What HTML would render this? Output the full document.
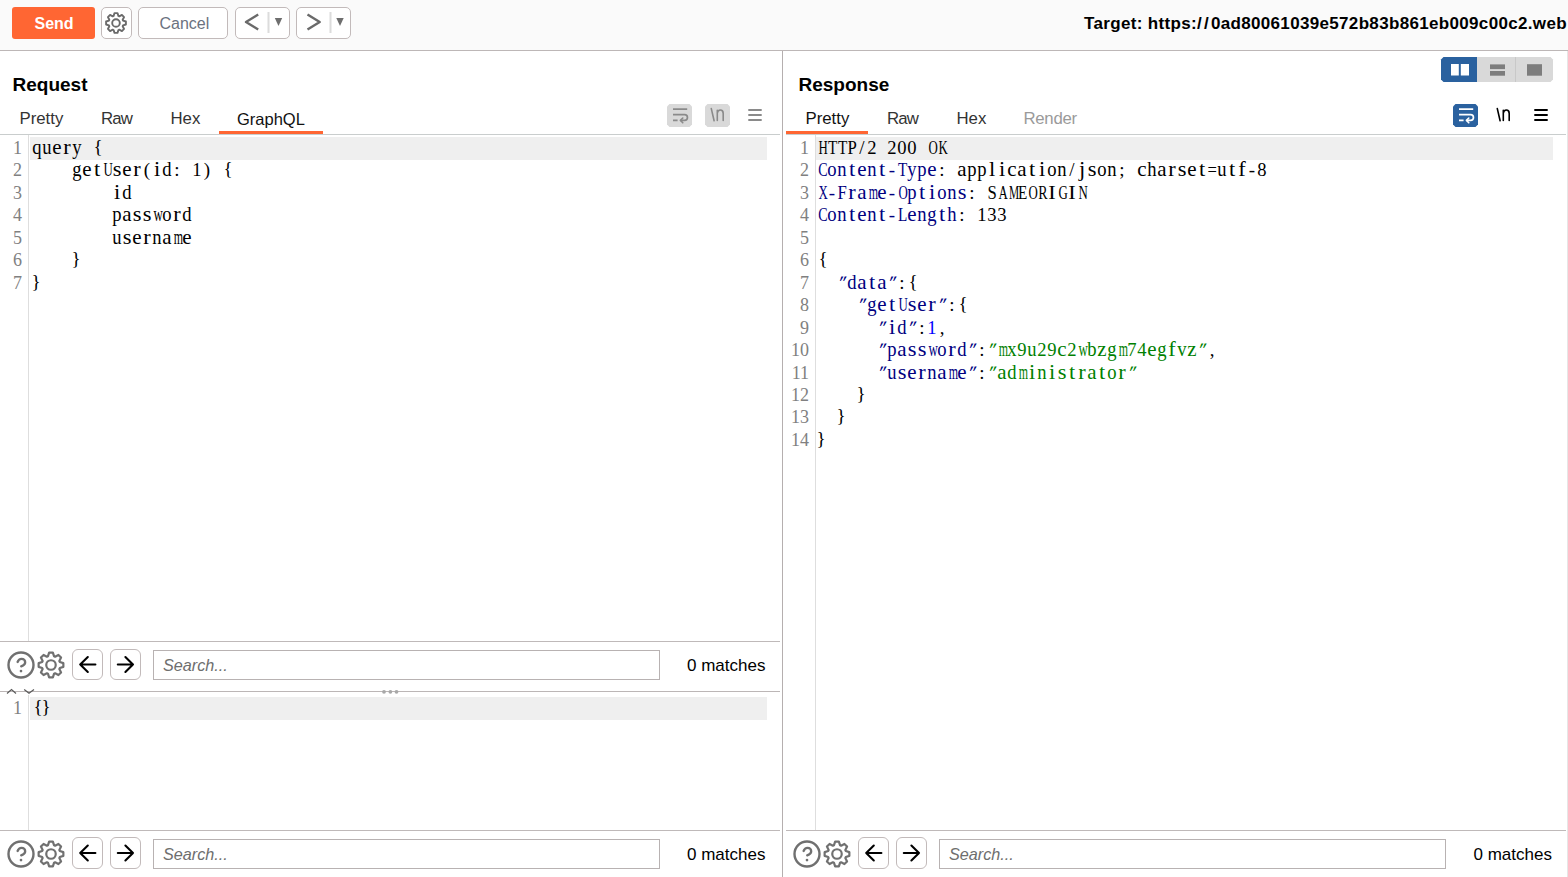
<!DOCTYPE html>
<html><head><meta charset="utf-8"><style>*{margin:0;padding:0;box-sizing:border-box}
html,body{width:1568px;height:877px;overflow:hidden;background:#fff;position:relative;font-family:"Liberation Sans",sans-serif}
.a{position:absolute}
svg.a{overflow:visible}
.t{position:absolute;line-height:1;white-space:pre}
.code{position:absolute;font-family:"Liberation Serif",serif;font-size:19px;white-space:pre;line-height:22.45px}
.code i{font-style:normal;display:inline-block;width:10px;text-align:center;transform-origin:50% 17.6px}
.ln{position:absolute;font-family:"Liberation Serif",serif;font-size:18px;color:#808080;text-align:right;white-space:pre;line-height:22.45px}
</style></head><body>
<div class="a" style="left:0px;top:0px;width:1568px;height:50px;background:#fafafa;"></div>
<div class="a" style="left:0px;top:50px;width:1568px;height:1px;background:#bdb7b7;"></div>
<div class="a" style="left:12px;top:7px;width:83px;height:32px;background:#ff6633;border-radius:3px"></div>
<div class="t" style="left:34.5px;top:16.46px;font-size:16px;font-weight:bold;color:#fff;font-style:normal;">Send</div>
<div class="a" style="left:101px;top:7px;width:31px;height:32px;border:1px solid #c2baba;border-radius:5px;background:#fff"></div>
<svg class="a" style="left:100.0px;top:7.0px" width="32" height="32" viewBox="0 0 32 32"><path d="M13.59,8.96 L14.51,6.11 L17.49,6.11 L18.41,8.96 A7.44,7.44 0 0 1 19.27,9.32 L21.93,7.95 L24.05,10.07 L22.68,12.73 A7.44,7.44 0 0 1 23.04,13.59 L25.89,14.51 L25.89,17.49 L23.04,18.41 A7.44,7.44 0 0 1 22.68,19.27 L24.05,21.93 L21.93,24.05 L19.27,22.68 A7.44,7.44 0 0 1 18.41,23.04 L17.49,25.89 L14.51,25.89 L13.59,23.04 A7.44,7.44 0 0 1 12.73,22.68 L10.07,24.05 L7.95,21.93 L9.32,19.27 A7.44,7.44 0 0 1 8.96,18.41 L6.11,17.49 L6.11,14.51 L8.96,13.59 A7.44,7.44 0 0 1 9.32,12.73 L7.95,10.07 L10.07,7.95 L12.73,9.32 A7.44,7.44 0 0 1 13.59,8.96Z" fill="none" stroke="#6a6a6a" stroke-width="1.9" stroke-linejoin="round"/><circle cx="16.0" cy="16.0" r="3.8000000000000003" fill="none" stroke="#6a6a6a" stroke-width="1.9"/></svg>
<div class="a" style="left:138px;top:7px;width:90px;height:32px;border:1px solid #c2baba;border-radius:5px;background:#fff"></div>
<div class="t" style="left:159.5px;top:16.46px;font-size:16px;font-weight:normal;color:#6b7280;font-style:normal;">Cancel</div>
<div class="a" style="left:235px;top:7px;width:55px;height:32px;border:1px solid #c2baba;border-radius:5px;background:#fff"></div>
<div class="a" style="left:296px;top:7px;width:55px;height:32px;border:1px solid #c2baba;border-radius:5px;background:#fff"></div>
<svg class="a" style="left:235px;top:7px" width="55" height="32" viewBox="0 0 55 32"><path d="M23.2,7.5 L11,15 L23.2,22.5" fill="none" stroke="#6a6a6a" stroke-width="2.4" stroke-linejoin="round"/><rect x="32.5" y="5" width="2" height="21" fill="#dcdcdc"/><path d="M39.8,11 H47.2 L43.5,19 Z" fill="#6e6e6e"/></svg>
<svg class="a" style="left:296px;top:7px" width="55" height="32" viewBox="0 0 55 32"><path d="M11.5,7.5 L23.7,15 L11.5,22.5" fill="none" stroke="#6a6a6a" stroke-width="2.4" stroke-linejoin="round"/><rect x="33.5" y="5" width="2" height="21" fill="#dcdcdc"/><path d="M40.3,11 H47.7 L44,19 Z" fill="#6e6e6e"/></svg>
<div class="t" style="left:1084px;top:14.6px;font-size:17px;font-weight:bold;color:#000;letter-spacing:0.33px">Target: https:<span style="letter-spacing:2.3px">//</span>0ad80061039e572b83b861eb009c00c2.web</div>
<div class="a" style="left:782px;top:51px;width:1px;height:826px;background:#b5afaf;"></div>
<div class="t" style="left:12.5px;top:74.92px;font-size:19px;font-weight:bold;color:#000;font-style:normal;">Request</div>
<div class="t" style="left:19.5px;top:110.78px;font-size:16.8px;font-weight:normal;color:#333;font-style:normal;">Pretty</div>
<div class="t" style="left:101px;top:110.78px;font-size:16.8px;font-weight:normal;color:#333;font-style:normal;letter-spacing:-0.8px">Raw</div>
<div class="t" style="left:170.5px;top:110.78px;font-size:16.8px;font-weight:normal;color:#333;font-style:normal;">Hex</div>
<div class="t" style="left:237px;top:111.03px;font-size:16.5px;font-weight:normal;color:#111;font-style:normal;">GraphQL</div>
<div class="a" style="left:219px;top:131px;width:104px;height:3px;background:#ff6633;"></div>
<div class="a" style="left:0px;top:134px;width:780px;height:1px;background:#c9cdcd;"></div>
<svg class="a" style="left:667px;top:104px" width="25" height="23" viewBox="0 0 25 23"><path d="M2.5,0 H22.5 L25,2.5 V20.5 L22.5,23 H2.5 L0,20.5 V2.5 Z" fill="#d9d9d9"/><path d="M6,5.1 H20.2 M6,10.7 H17.6 A2.85,2.85 0 0 1 17.6,16.4 H13.8 M6,16.4 H10.6" stroke="#8a8a8a" stroke-width="1.7" fill="none"/><path d="M15.8,14 L13.4,16.4 L15.8,18.8" stroke="#8a8a8a" stroke-width="1.6" fill="none" stroke-linecap="round" stroke-linejoin="round"/></svg>
<svg class="a" style="left:705px;top:104px" width="25" height="23" viewBox="0 0 25 23"><path d="M2.5,0 H22.5 L25,2.5 V20.5 L22.5,23 H2.5 L0,20.5 V2.5 Z" fill="#d9d9d9"/><path d="M6.3,4.6 L9.1,16.7" stroke="#8a8a8a" stroke-width="1.6" stroke-linecap="round" fill="none"/><path d="M12.3,16.4 V6.2 M12.3,9.2 C12.6,7.2 13.8,6 15.3,6 C17,6 18.2,7.2 18.2,9.4 V16.4" stroke="#8a8a8a" stroke-width="1.6" stroke-linecap="round" fill="none"/></svg>
<svg class="a" style="left:748px;top:104px" width="16" height="23" viewBox="0 0 16 23"><path d="M0.3,6 H13.7 M0.3,11 H13.7 M0.3,16 H13.7" stroke="#8a8a8a" stroke-width="1.9" fill="none"/></svg>
<div class="a" style="left:28px;top:135px;width:1px;height:506px;background:#dedede;"></div>
<div class="a" style="left:30px;top:137px;width:737px;height:23px;background:#efefef;"></div>
<div class="ln" style="left:0px;top:137px;width:22px">1
2
3
4
5
6
7</div>
<div class="code" style="left:32px;top:137px;color:#000"><i style="transform:scale(0.979,1.1)">q</i><i style="transform:scale(0.979,1.1)">u</i><i style="transform:scale(1.103,1.1)">e</i><i style="transform:scale(1.180,1.1)">r</i><i style="transform:scale(0.979,1.1)">y</i><i> </i><i style="transform:translate(1px,-1.5px)">{</i>
<i> </i><i> </i><i> </i><i> </i><i style="transform:scale(0.979,1.1)">g</i><i style="transform:scale(1.103,1.1)">e</i><i style="transform:scale(1.180,1.1)">t</i><i style="transform:scale(0.678,1.0)">U</i><i style="transform:scale(1.180,1.1)">s</i><i style="transform:scale(1.103,1.1)">e</i><i style="transform:scale(1.180,1.1)">r</i><i>(</i><i style="transform:scale(1.180,1.1)">i</i><i style="transform:scale(0.979,1.1)">d</i><i>:</i><i> </i><i style="transform:scale(0.979,1.0)">1</i><i>)</i><i> </i><i style="transform:translate(1px,-1.5px)">{</i>
<i> </i><i> </i><i> </i><i> </i><i> </i><i> </i><i> </i><i> </i><i style="transform:scale(1.180,1.1)">i</i><i style="transform:scale(0.979,1.1)">d</i>
<i> </i><i> </i><i> </i><i> </i><i> </i><i> </i><i> </i><i> </i><i style="transform:scale(0.979,1.1)">p</i><i style="transform:scale(1.103,1.1)">a</i><i style="transform:scale(1.180,1.1)">s</i><i style="transform:scale(1.180,1.1)">s</i><i style="transform:scale(0.678,1.1)">w</i><i style="transform:scale(0.979,1.1)">o</i><i style="transform:scale(1.180,1.1)">r</i><i style="transform:scale(0.979,1.1)">d</i>
<i> </i><i> </i><i> </i><i> </i><i> </i><i> </i><i> </i><i> </i><i style="transform:scale(0.979,1.1)">u</i><i style="transform:scale(1.180,1.1)">s</i><i style="transform:scale(1.103,1.1)">e</i><i style="transform:scale(1.180,1.1)">r</i><i style="transform:scale(0.979,1.1)">n</i><i style="transform:scale(1.103,1.1)">a</i><i style="transform:scale(0.629,1.1)">m</i><i style="transform:scale(1.103,1.1)">e</i>
<i> </i><i> </i><i> </i><i> </i><i style="transform:translate(-1px,-1.5px)">}</i>
<i style="transform:translate(-1px,-1.5px)">}</i></div>
<div class="a" style="left:0px;top:641px;width:780px;height:1px;background:#bfb9b9;"></div>
<svg class="a" style="left:4.9px;top:648.8px" width="32" height="32" viewBox="0 0 32 32"><circle cx="16" cy="16" r="12.5" fill="none" stroke="#707070" stroke-width="2.4"/><path d="M12.6,13 C13.3,11 14.9,9.8 16.6,9.8 C18.8,9.8 20.2,11.4 20.2,13.2 C20.2,15.2 18.6,16.5 16.2,17.4" fill="none" stroke="#707070" stroke-width="2.3" stroke-linecap="round"/><circle cx="16" cy="22.1" r="1.35" fill="#707070"/></svg>
<svg class="a" style="left:34.9px;top:648.8px" width="32" height="32" viewBox="0 0 32 32"><path d="M12.99,7.20 L14.13,3.64 L17.87,3.64 L19.01,7.20 A9.30,9.30 0 0 1 20.09,7.65 L23.42,5.94 L26.06,8.58 L24.35,11.91 A9.30,9.30 0 0 1 24.80,12.99 L28.36,14.13 L28.36,17.87 L24.80,19.01 A9.30,9.30 0 0 1 24.35,20.09 L26.06,23.42 L23.42,26.06 L20.09,24.35 A9.30,9.30 0 0 1 19.01,24.80 L17.87,28.36 L14.13,28.36 L12.99,24.80 A9.30,9.30 0 0 1 11.91,24.35 L8.58,26.06 L5.94,23.42 L7.65,20.09 A9.30,9.30 0 0 1 7.20,19.01 L3.64,17.87 L3.64,14.13 L7.20,12.99 A9.30,9.30 0 0 1 7.65,11.91 L5.94,8.58 L8.58,5.94 L11.91,7.65 A9.30,9.30 0 0 1 12.99,7.20Z" fill="none" stroke="#707070" stroke-width="2.2" stroke-linejoin="round"/><circle cx="16.0" cy="16.0" r="4.75" fill="none" stroke="#707070" stroke-width="2.2"/></svg>
<div class="a" style="left:72px;top:649px;width:31px;height:31px;border:1px solid #c2baba;border-radius:6px;background:#fff"></div>
<svg class="a" style="left:72px;top:649px" width="31" height="31" viewBox="0 0 31 31"><path d="M8.2,15.5 H23.4 M15.8,8.1 L8.2,15.5 L15.8,22.9" fill="none" stroke="#000" stroke-width="2.1" stroke-linecap="round" stroke-linejoin="round"/></svg>
<div class="a" style="left:110px;top:649px;width:31px;height:31px;border:1px solid #c2baba;border-radius:6px;background:#fff"></div>
<svg class="a" style="left:110px;top:649px" width="31" height="31" viewBox="0 0 31 31"><path d="M7.8,15.5 H23 M15.4,8.1 L23,15.5 L15.4,22.9" fill="none" stroke="#000" stroke-width="2.1" stroke-linecap="round" stroke-linejoin="round"/></svg>
<div class="a" style="left:153px;top:650px;width:507px;height:30px;border:1.5px solid #b8b2b2;background:#fff"></div>
<div class="t" style="left:163px;top:657.29px;font-size:16.2px;font-weight:normal;color:#6e6e6e;font-style:italic;">Search...</div>
<div class="t" style="left:687px;top:656.61px;font-size:17px;font-weight:normal;color:#000;font-style:normal;">0 matches</div>
<div class="a" style="left:0px;top:691px;width:780px;height:1px;background:#bcb6b6;"></div>
<svg class="a" style="left:0px;top:684px" width="40" height="14" viewBox="0 0 40 14"><path d="M7,9.5 L11.5,5.5 L16,9.5 M24.2,5.5 L29,9.3 L34,5.5" stroke="#5a5a5a" stroke-width="1.2" fill="none"/></svg>
<svg class="a" style="left:378px;top:685px" width="26" height="14" viewBox="0 0 26 14"><circle cx="6" cy="6.8" r="1.9" fill="#a8a8a8"/><circle cx="12.4" cy="6.8" r="1.9" fill="#a8a8a8"/><circle cx="18.5" cy="6.8" r="1.9" fill="#a8a8a8"/></svg>
<div class="a" style="left:28px;top:695px;width:1px;height:135px;background:#dedede;"></div>
<div class="a" style="left:30px;top:697px;width:737px;height:23px;background:#efefef;"></div>
<div class="ln" style="left:0px;top:697px;width:22px">1</div>
<div class="code" style="left:32px;top:697px;color:#000"><i style="transform:translate(1px,-1.5px)">{</i><i style="transform:translate(-1px,-1.5px)">}</i></div>
<div class="a" style="left:0px;top:830px;width:780px;height:1px;background:#bfb9b9;"></div>
<svg class="a" style="left:4.9px;top:837.8px" width="32" height="32" viewBox="0 0 32 32"><circle cx="16" cy="16" r="12.5" fill="none" stroke="#707070" stroke-width="2.4"/><path d="M12.6,13 C13.3,11 14.9,9.8 16.6,9.8 C18.8,9.8 20.2,11.4 20.2,13.2 C20.2,15.2 18.6,16.5 16.2,17.4" fill="none" stroke="#707070" stroke-width="2.3" stroke-linecap="round"/><circle cx="16" cy="22.1" r="1.35" fill="#707070"/></svg>
<svg class="a" style="left:34.9px;top:837.8px" width="32" height="32" viewBox="0 0 32 32"><path d="M12.99,7.20 L14.13,3.64 L17.87,3.64 L19.01,7.20 A9.30,9.30 0 0 1 20.09,7.65 L23.42,5.94 L26.06,8.58 L24.35,11.91 A9.30,9.30 0 0 1 24.80,12.99 L28.36,14.13 L28.36,17.87 L24.80,19.01 A9.30,9.30 0 0 1 24.35,20.09 L26.06,23.42 L23.42,26.06 L20.09,24.35 A9.30,9.30 0 0 1 19.01,24.80 L17.87,28.36 L14.13,28.36 L12.99,24.80 A9.30,9.30 0 0 1 11.91,24.35 L8.58,26.06 L5.94,23.42 L7.65,20.09 A9.30,9.30 0 0 1 7.20,19.01 L3.64,17.87 L3.64,14.13 L7.20,12.99 A9.30,9.30 0 0 1 7.65,11.91 L5.94,8.58 L8.58,5.94 L11.91,7.65 A9.30,9.30 0 0 1 12.99,7.20Z" fill="none" stroke="#707070" stroke-width="2.2" stroke-linejoin="round"/><circle cx="16.0" cy="16.0" r="4.75" fill="none" stroke="#707070" stroke-width="2.2"/></svg>
<div class="a" style="left:72px;top:837px;width:31px;height:32px;border:1px solid #c2baba;border-radius:6px;background:#fff"></div>
<svg class="a" style="left:72px;top:837px" width="31" height="32" viewBox="0 0 31 32"><path d="M8.2,16.0 H23.4 M15.8,8.6 L8.2,16.0 L15.8,23.4" fill="none" stroke="#000" stroke-width="2.1" stroke-linecap="round" stroke-linejoin="round"/></svg>
<div class="a" style="left:110px;top:837px;width:31px;height:32px;border:1px solid #c2baba;border-radius:6px;background:#fff"></div>
<svg class="a" style="left:110px;top:837px" width="31" height="32" viewBox="0 0 31 32"><path d="M7.8,16.0 H23 M15.4,8.6 L23,16.0 L15.4,23.4" fill="none" stroke="#000" stroke-width="2.1" stroke-linecap="round" stroke-linejoin="round"/></svg>
<div class="a" style="left:153px;top:839px;width:507px;height:30px;border:1.5px solid #b8b2b2;background:#fff"></div>
<div class="t" style="left:163px;top:846.29px;font-size:16.2px;font-weight:normal;color:#6e6e6e;font-style:italic;">Search...</div>
<div class="t" style="left:687px;top:845.61px;font-size:17px;font-weight:normal;color:#000;font-style:normal;">0 matches</div>
<div class="t" style="left:798.5px;top:74.92px;font-size:19px;font-weight:bold;color:#000;font-style:normal;">Response</div>
<svg class="a" style="left:1441px;top:57px" width="112" height="25" viewBox="0 0 112 25"><path d="M2.5,0 H36 V25 H2.5 L0,22.5 V2.5 Z" fill="#2a619f"/><path d="M36,0 H109.5 L112,2.5 V22.5 L109.5,25 H36 Z" fill="#d9d9d9"/><rect x="74" y="0" width="1" height="25" fill="#c8c8c8"/><rect x="10" y="7" width="7.8" height="11.5" fill="#fff"/><rect x="19.8" y="7" width="8.2" height="11.5" fill="#fff"/><rect x="49" y="7.4" width="15" height="4.7" fill="#7d7d7d"/><rect x="49" y="14" width="15" height="4.7" fill="#7d7d7d"/><rect x="86" y="7.2" width="15" height="11.5" fill="#7d7d7d"/></svg>
<div class="t" style="left:805.5px;top:110.78px;font-size:16.8px;font-weight:normal;color:#111;font-style:normal;">Pretty</div>
<div class="t" style="left:887px;top:110.78px;font-size:16.8px;font-weight:normal;color:#333;font-style:normal;letter-spacing:-0.8px">Raw</div>
<div class="t" style="left:956.5px;top:110.78px;font-size:16.8px;font-weight:normal;color:#333;font-style:normal;">Hex</div>
<div class="t" style="left:1023.5px;top:110.78px;font-size:16.8px;font-weight:normal;color:#9a9a9a;font-style:normal;letter-spacing:-0.3px">Render</div>
<div class="a" style="left:786px;top:131px;width:82px;height:3px;background:#ff6633;"></div>
<div class="a" style="left:786px;top:134px;width:780px;height:1px;background:#c9cdcd;"></div>
<svg class="a" style="left:1453px;top:104px" width="25" height="23" viewBox="0 0 25 23"><path d="M2.5,0 H22.5 L25,2.5 V20.5 L22.5,23 H2.5 L0,20.5 V2.5 Z" fill="#2a619f"/><path d="M6,5.1 H20.2 M6,10.7 H17.6 A2.85,2.85 0 0 1 17.6,16.4 H13.8 M6,16.4 H10.6" stroke="#fff" stroke-width="1.7" fill="none"/><path d="M15.8,14 L13.4,16.4 L15.8,18.8" stroke="#fff" stroke-width="1.6" fill="none" stroke-linecap="round" stroke-linejoin="round"/></svg>
<svg class="a" style="left:1491px;top:104px" width="25" height="23" viewBox="0 0 25 23"><path d="M6.3,4.6 L9.1,16.7" stroke="#000" stroke-width="1.6" stroke-linecap="round" fill="none"/><path d="M12.3,16.4 V6.2 M12.3,9.2 C12.6,7.2 13.8,6 15.3,6 C17,6 18.2,7.2 18.2,9.4 V16.4" stroke="#000" stroke-width="1.6" stroke-linecap="round" fill="none"/></svg>
<svg class="a" style="left:1534px;top:104px" width="16" height="23" viewBox="0 0 16 23"><path d="M0.3,6 H13.7 M0.3,11 H13.7 M0.3,16 H13.7" stroke="#000" stroke-width="1.9" fill="none"/></svg>
<div class="a" style="left:815px;top:135px;width:1px;height:695px;background:#dedede;"></div>
<div class="a" style="left:816px;top:137px;width:737px;height:23px;background:#efefef;"></div>
<div class="ln" style="left:786px;top:137px;width:23px">1
2
3
4
5
6
7
8
9
10
11
12
13
14</div>
<div class="code" style="left:817px;top:137px;color:#000"><i style="transform:scale(0.678,1.0)">H</i><i style="transform:scale(0.801,1.0)">T</i><i style="transform:scale(0.801,1.0)">T</i><i style="transform:scale(0.880,1.0)">P</i><i>/</i><i style="transform:scale(0.979,1.0)">2</i><i> </i><i style="transform:scale(0.979,1.0)">2</i><i style="transform:scale(0.979,1.0)">0</i><i style="transform:scale(0.979,1.0)">0</i><i> </i><i style="transform:scale(0.678,1.0)">O</i><i style="transform:scale(0.678,1.0)">K</i>
<span style="color:#000080"><i style="transform:scale(0.734,1.0)">C</i><i style="transform:scale(0.979,1.1)">o</i><i style="transform:scale(0.979,1.1)">n</i><i style="transform:scale(1.180,1.1)">t</i><i style="transform:scale(1.103,1.1)">e</i><i style="transform:scale(0.979,1.1)">n</i><i style="transform:scale(1.180,1.1)">t</i><i>-</i><i style="transform:scale(0.801,1.0)">T</i><i style="transform:scale(0.979,1.1)">y</i><i style="transform:scale(0.979,1.1)">p</i><i style="transform:scale(1.103,1.1)">e</i></span><i>:</i><i> </i><i style="transform:scale(1.103,1.1)">a</i><i style="transform:scale(0.979,1.1)">p</i><i style="transform:scale(0.979,1.1)">p</i><i style="transform:scale(1.180,1.1)">l</i><i style="transform:scale(1.180,1.1)">i</i><i style="transform:scale(1.103,1.1)">c</i><i style="transform:scale(1.103,1.1)">a</i><i style="transform:scale(1.180,1.1)">t</i><i style="transform:scale(1.180,1.1)">i</i><i style="transform:scale(0.979,1.1)">o</i><i style="transform:scale(0.979,1.1)">n</i><i>/</i><i style="transform:scale(1.180,1.1)">j</i><i style="transform:scale(1.180,1.1)">s</i><i style="transform:scale(0.979,1.1)">o</i><i style="transform:scale(0.979,1.1)">n</i><i>;</i><i> </i><i style="transform:scale(1.103,1.1)">c</i><i style="transform:scale(0.979,1.1)">h</i><i style="transform:scale(1.103,1.1)">a</i><i style="transform:scale(1.180,1.1)">r</i><i style="transform:scale(1.180,1.1)">s</i><i style="transform:scale(1.103,1.1)">e</i><i style="transform:scale(1.180,1.1)">t</i><i style="transform:scale(0.877,1.0)">=</i><i style="transform:scale(0.979,1.1)">u</i><i style="transform:scale(1.180,1.1)">t</i><i style="transform:scale(1.180,1.1)">f</i><i>-</i><i style="transform:scale(0.979,1.0)">8</i>
<span style="color:#000080"><i style="transform:scale(0.678,1.0)">X</i><i>-</i><i style="transform:scale(0.880,1.0)">F</i><i style="transform:scale(1.180,1.1)">r</i><i style="transform:scale(1.103,1.1)">a</i><i style="transform:scale(0.629,1.1)">m</i><i style="transform:scale(1.103,1.1)">e</i><i>-</i><i style="transform:scale(0.678,1.0)">O</i><i style="transform:scale(0.979,1.1)">p</i><i style="transform:scale(1.180,1.1)">t</i><i style="transform:scale(1.180,1.1)">i</i><i style="transform:scale(0.979,1.1)">o</i><i style="transform:scale(0.979,1.1)">n</i><i style="transform:scale(1.180,1.1)">s</i></span><i>:</i><i> </i><i style="transform:scale(0.880,1.0)">S</i><i style="transform:scale(0.678,1.0)">A</i><i style="transform:scale(0.600,1.0)">M</i><i style="transform:scale(0.801,1.0)">E</i><i style="transform:scale(0.678,1.0)">O</i><i style="transform:scale(0.734,1.0)">R</i><i style="transform:scale(1.180,1.0)">I</i><i style="transform:scale(0.678,1.0)">G</i><i style="transform:scale(1.180,1.0)">I</i><i style="transform:scale(0.678,1.0)">N</i>
<span style="color:#000080"><i style="transform:scale(0.734,1.0)">C</i><i style="transform:scale(0.979,1.1)">o</i><i style="transform:scale(0.979,1.1)">n</i><i style="transform:scale(1.180,1.1)">t</i><i style="transform:scale(1.103,1.1)">e</i><i style="transform:scale(0.979,1.1)">n</i><i style="transform:scale(1.180,1.1)">t</i><i>-</i><i style="transform:scale(0.801,1.0)">L</i><i style="transform:scale(1.103,1.1)">e</i><i style="transform:scale(0.979,1.1)">n</i><i style="transform:scale(0.979,1.1)">g</i><i style="transform:scale(1.180,1.1)">t</i><i style="transform:scale(0.979,1.1)">h</i></span><i>:</i><i> </i><i style="transform:scale(0.979,1.0)">1</i><i style="transform:scale(0.979,1.0)">3</i><i style="transform:scale(0.979,1.0)">3</i>

<i style="transform:translate(1px,-1.5px)">{</i>
<i> </i><i> </i><span style="color:#000080"><i style="transform:translate(-1.6px,-0.5px) skewX(-14deg) scaleX(0.85);font-weight:bold">″</i><i style="transform:scale(0.979,1.1)">d</i><i style="transform:scale(1.103,1.1)">a</i><i style="transform:scale(1.180,1.1)">t</i><i style="transform:scale(1.103,1.1)">a</i><i style="transform:translate(-1.6px,-0.5px) skewX(-14deg) scaleX(0.85);font-weight:bold">″</i></span><i>:</i><i style="transform:translate(1px,-1.5px)">{</i>
<i> </i><i> </i><i> </i><i> </i><span style="color:#000080"><i style="transform:translate(-1.6px,-0.5px) skewX(-14deg) scaleX(0.85);font-weight:bold">″</i><i style="transform:scale(0.979,1.1)">g</i><i style="transform:scale(1.103,1.1)">e</i><i style="transform:scale(1.180,1.1)">t</i><i style="transform:scale(0.678,1.0)">U</i><i style="transform:scale(1.180,1.1)">s</i><i style="transform:scale(1.103,1.1)">e</i><i style="transform:scale(1.180,1.1)">r</i><i style="transform:translate(-1.6px,-0.5px) skewX(-14deg) scaleX(0.85);font-weight:bold">″</i></span><i>:</i><i style="transform:translate(1px,-1.5px)">{</i>
<i> </i><i> </i><i> </i><i> </i><i> </i><i> </i><span style="color:#000080"><i style="transform:translate(-1.6px,-0.5px) skewX(-14deg) scaleX(0.85);font-weight:bold">″</i><i style="transform:scale(1.180,1.1)">i</i><i style="transform:scale(0.979,1.1)">d</i><i style="transform:translate(-1.6px,-0.5px) skewX(-14deg) scaleX(0.85);font-weight:bold">″</i></span><i>:</i><span style="color:#0000ff"><i style="transform:scale(0.979,1.0)">1</i></span><i>,</i>
<i> </i><i> </i><i> </i><i> </i><i> </i><i> </i><span style="color:#000080"><i style="transform:translate(-1.6px,-0.5px) skewX(-14deg) scaleX(0.85);font-weight:bold">″</i><i style="transform:scale(0.979,1.1)">p</i><i style="transform:scale(1.103,1.1)">a</i><i style="transform:scale(1.180,1.1)">s</i><i style="transform:scale(1.180,1.1)">s</i><i style="transform:scale(0.678,1.1)">w</i><i style="transform:scale(0.979,1.1)">o</i><i style="transform:scale(1.180,1.1)">r</i><i style="transform:scale(0.979,1.1)">d</i><i style="transform:translate(-1.6px,-0.5px) skewX(-14deg) scaleX(0.85);font-weight:bold">″</i></span><i>:</i><span style="color:#008000"><i style="transform:translate(-1.6px,-0.5px) skewX(-14deg) scaleX(0.85);font-weight:bold">″</i><i style="transform:scale(0.629,1.1)">m</i><i style="transform:scale(0.979,1.1)">x</i><i style="transform:scale(0.979,1.0)">9</i><i style="transform:scale(0.979,1.1)">u</i><i style="transform:scale(0.979,1.0)">2</i><i style="transform:scale(0.979,1.0)">9</i><i style="transform:scale(1.103,1.1)">c</i><i style="transform:scale(0.979,1.0)">2</i><i style="transform:scale(0.678,1.1)">w</i><i style="transform:scale(0.979,1.1)">b</i><i style="transform:scale(1.103,1.1)">z</i><i style="transform:scale(0.979,1.1)">g</i><i style="transform:scale(0.629,1.1)">m</i><i style="transform:scale(0.979,1.0)">7</i><i style="transform:scale(0.979,1.0)">4</i><i style="transform:scale(1.103,1.1)">e</i><i style="transform:scale(0.979,1.1)">g</i><i style="transform:scale(1.180,1.1)">f</i><i style="transform:scale(0.979,1.1)">v</i><i style="transform:scale(1.103,1.1)">z</i><i style="transform:translate(-1.6px,-0.5px) skewX(-14deg) scaleX(0.85);font-weight:bold">″</i></span><i>,</i>
<i> </i><i> </i><i> </i><i> </i><i> </i><i> </i><span style="color:#000080"><i style="transform:translate(-1.6px,-0.5px) skewX(-14deg) scaleX(0.85);font-weight:bold">″</i><i style="transform:scale(0.979,1.1)">u</i><i style="transform:scale(1.180,1.1)">s</i><i style="transform:scale(1.103,1.1)">e</i><i style="transform:scale(1.180,1.1)">r</i><i style="transform:scale(0.979,1.1)">n</i><i style="transform:scale(1.103,1.1)">a</i><i style="transform:scale(0.629,1.1)">m</i><i style="transform:scale(1.103,1.1)">e</i><i style="transform:translate(-1.6px,-0.5px) skewX(-14deg) scaleX(0.85);font-weight:bold">″</i></span><i>:</i><span style="color:#008000"><i style="transform:translate(-1.6px,-0.5px) skewX(-14deg) scaleX(0.85);font-weight:bold">″</i><i style="transform:scale(1.103,1.1)">a</i><i style="transform:scale(0.979,1.1)">d</i><i style="transform:scale(0.629,1.1)">m</i><i style="transform:scale(1.180,1.1)">i</i><i style="transform:scale(0.979,1.1)">n</i><i style="transform:scale(1.180,1.1)">i</i><i style="transform:scale(1.180,1.1)">s</i><i style="transform:scale(1.180,1.1)">t</i><i style="transform:scale(1.180,1.1)">r</i><i style="transform:scale(1.103,1.1)">a</i><i style="transform:scale(1.180,1.1)">t</i><i style="transform:scale(0.979,1.1)">o</i><i style="transform:scale(1.180,1.1)">r</i><i style="transform:translate(-1.6px,-0.5px) skewX(-14deg) scaleX(0.85);font-weight:bold">″</i></span>
<i> </i><i> </i><i> </i><i> </i><i style="transform:translate(-1px,-1.5px)">}</i>
<i> </i><i> </i><i style="transform:translate(-1px,-1.5px)">}</i>
<i style="transform:translate(-1px,-1.5px)">}</i></div>
<div class="a" style="left:786px;top:830px;width:780px;height:1px;background:#bfb9b9;"></div>
<div class="a" style="left:1567px;top:51px;width:1px;height:826px;background:#e6e6e6;"></div>
<svg class="a" style="left:790.9px;top:837.8px" width="32" height="32" viewBox="0 0 32 32"><circle cx="16" cy="16" r="12.5" fill="none" stroke="#707070" stroke-width="2.4"/><path d="M12.6,13 C13.3,11 14.9,9.8 16.6,9.8 C18.8,9.8 20.2,11.4 20.2,13.2 C20.2,15.2 18.6,16.5 16.2,17.4" fill="none" stroke="#707070" stroke-width="2.3" stroke-linecap="round"/><circle cx="16" cy="22.1" r="1.35" fill="#707070"/></svg>
<svg class="a" style="left:820.9px;top:837.8px" width="32" height="32" viewBox="0 0 32 32"><path d="M12.99,7.20 L14.13,3.64 L17.87,3.64 L19.01,7.20 A9.30,9.30 0 0 1 20.09,7.65 L23.42,5.94 L26.06,8.58 L24.35,11.91 A9.30,9.30 0 0 1 24.80,12.99 L28.36,14.13 L28.36,17.87 L24.80,19.01 A9.30,9.30 0 0 1 24.35,20.09 L26.06,23.42 L23.42,26.06 L20.09,24.35 A9.30,9.30 0 0 1 19.01,24.80 L17.87,28.36 L14.13,28.36 L12.99,24.80 A9.30,9.30 0 0 1 11.91,24.35 L8.58,26.06 L5.94,23.42 L7.65,20.09 A9.30,9.30 0 0 1 7.20,19.01 L3.64,17.87 L3.64,14.13 L7.20,12.99 A9.30,9.30 0 0 1 7.65,11.91 L5.94,8.58 L8.58,5.94 L11.91,7.65 A9.30,9.30 0 0 1 12.99,7.20Z" fill="none" stroke="#707070" stroke-width="2.2" stroke-linejoin="round"/><circle cx="16.0" cy="16.0" r="4.75" fill="none" stroke="#707070" stroke-width="2.2"/></svg>
<div class="a" style="left:858px;top:837px;width:31px;height:32px;border:1px solid #c2baba;border-radius:6px;background:#fff"></div>
<svg class="a" style="left:858px;top:837px" width="31" height="32" viewBox="0 0 31 32"><path d="M8.2,16.0 H23.4 M15.8,8.6 L8.2,16.0 L15.8,23.4" fill="none" stroke="#000" stroke-width="2.1" stroke-linecap="round" stroke-linejoin="round"/></svg>
<div class="a" style="left:896px;top:837px;width:31px;height:32px;border:1px solid #c2baba;border-radius:6px;background:#fff"></div>
<svg class="a" style="left:896px;top:837px" width="31" height="32" viewBox="0 0 31 32"><path d="M7.8,16.0 H23 M15.4,8.6 L23,16.0 L15.4,23.4" fill="none" stroke="#000" stroke-width="2.1" stroke-linecap="round" stroke-linejoin="round"/></svg>
<div class="a" style="left:939px;top:839px;width:507px;height:30px;border:1.5px solid #b8b2b2;background:#fff"></div>
<div class="t" style="left:949px;top:846.29px;font-size:16.2px;font-weight:normal;color:#6e6e6e;font-style:italic;">Search...</div>
<div class="t" style="left:1473.5px;top:845.61px;font-size:17px;font-weight:normal;color:#000;font-style:normal;">0 matches</div>
</body></html>
